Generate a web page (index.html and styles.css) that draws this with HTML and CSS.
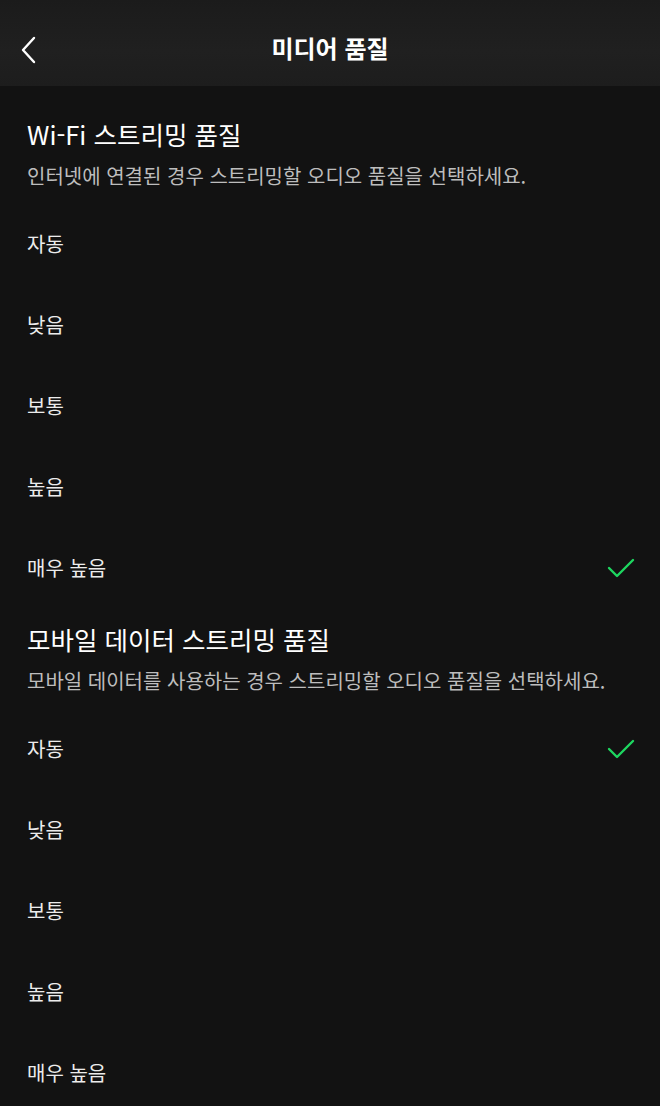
FILE: index.html
```html
<!DOCTYPE html>
<html lang="ko">
<head>
<meta charset="utf-8">
<link rel="stylesheet" href="styles.css">
</head>
<body>
<header class="topbar">
  <button class="back" aria-label="뒤로">
    <svg width="20" height="30" viewBox="0 0 20 30"><path d="M14 3 L3 15 L14 27" fill="none" stroke="#fff" stroke-width="2.4" stroke-linecap="round" stroke-linejoin="round"/></svg>
  </button>
  <h1 class="title">미디어 품질</h1>
</header>
<main class="content">
  <section class="section">
    <h2 class="sec-title">Wi-Fi 스트리밍 품질</h2>
    <p class="sec-desc">인터넷에 연결된 경우 스트리밍할 오디오 품질을 선택하세요.</p>
    <ul class="options">
      <li class="option">자동</li>
      <li class="option">낮음</li>
      <li class="option">보통</li>
      <li class="option">높음</li>
      <li class="option selected">매우 높음<svg class="check" width="30" height="24" viewBox="0 0 30 24"><path d="M3 12 L11 20 L27 4" fill="none" stroke="#1ed760" stroke-width="2.4" stroke-linecap="round" stroke-linejoin="round"/></svg></li>
    </ul>
  </section>
  <section class="section">
    <h2 class="sec-title">모바일 데이터 스트리밍 품질</h2>
    <p class="sec-desc">모바일 데이터를 사용하는 경우 스트리밍할 오디오 품질을 선택하세요.</p>
    <ul class="options">
      <li class="option selected">자동<svg class="check" width="30" height="24" viewBox="0 0 30 24"><path d="M3 12 L11 20 L27 4" fill="none" stroke="#1ed760" stroke-width="2.4" stroke-linecap="round" stroke-linejoin="round"/></svg></li>
      <li class="option">낮음</li>
      <li class="option">보통</li>
      <li class="option">높음</li>
      <li class="option">매우 높음</li>
    </ul>
  </section>
</main>
</body>
</html>
```

FILE: styles.css
```css
* { box-sizing: border-box; }
html, body {
  margin: 0;
  padding: 0;
  background: #121212;
  color: #fff;
  font-family: "Noto Sans CJK KR", "Noto Sans", sans-serif;
  height: 1106px;
  overflow: hidden;
}
.topbar {
  height: 86px;
  background: linear-gradient(180deg, #1b1b1b 0%, #202020 60%, #1d1d1d 100%);
  display: flex;
  align-items: center;
  justify-content: center;
  position: relative;
}
.back {
  position: absolute;
  left: 20px;
  top: 35px;
  background: none;
  border: 0;
  padding: 0;
  width: 20px;
  height: 30px;
  display: block;
}
.back svg { display: block; }
.title {
  margin: 0;
  font-size: 24px;
  font-weight: 700;
  line-height: 30px;
  margin-top: 10px;
}
.content {
  padding: 30px 0 0 27px;
}
.section + .section { margin-top: 13px; }
.sec-title {
  margin: 0;
  font-size: 25.5px;
  font-weight: 400;
  line-height: 36px;
  color: #fff;
}
.sec-desc {
  margin: 11px 0 0;
  font-size: 20px;
  line-height: 26px;
  color: #bdbdbd;
}
.options {
  list-style: none;
  margin: 14px 0 0;
  padding: 0;
}
.option {
  height: 81px;
  display: flex;
  align-items: center;
  justify-content: space-between;
  padding-right: 24px;
  font-size: 20px;
  color: #ececec;
}
.check { display: block; margin-top: 1px; }
```
